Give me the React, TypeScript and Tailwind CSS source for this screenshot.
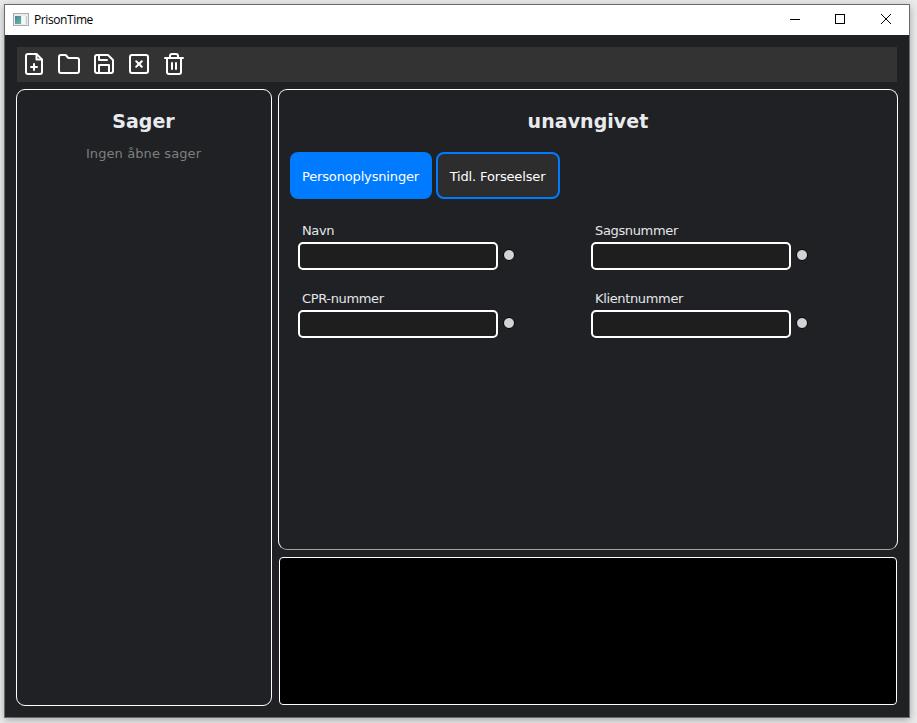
import React from "react";

const icons: Record<string, string[]> = {
  add: [
    "M14.5 2H6a2 2 0 0 0-2 2v16a2 2 0 0 0 2 2h12a2 2 0 0 0 2-2V7.5Z",
    "M14.5 2.5v5h5",
    "M9 15h6",
    "M12 12v6",
  ],
  folder: [
    "M20 21a2 2 0 0 0 2-2V8a2 2 0 0 0-2-2h-7.9a2 2 0 0 1-1.69-.9L9.6 3.9A2 2 0 0 0 7.93 3H4a2 2 0 0 0-2 2v14a2 2 0 0 0 2 2Z",
  ],
  save: [
    "M19 21H5a2 2 0 0 1-2-2V5a2 2 0 0 1 2-2h11l5 5v11a2 2 0 0 1-2 2z",
    "M17 21v-8H7v8",
    "M7 3v5h8",
  ],
  close: [
    "M5 3h14a2 2 0 0 1 2 2v14a2 2 0 0 1-2 2H5a2 2 0 0 1-2-2V5a2 2 0 0 1 2-2z",
    "m14.8 9.2-5.6 5.6",
    "m9.2 9.2 5.6 5.6",
  ],
  trash: [
    "M3 6h18",
    "M19 6v14a2 2 0 0 1-2 2H7a2 2 0 0 1-2-2V6",
    "M8 6V4a2 2 0 0 1 2-2h4a2 2 0 0 1 2 2v2",
    "M10 11v6",
    "M14 11v6",
  ],
};

function ToolIcon({ name }: { name: string }) {
  return (
    <button aria-label={name} className="h-6 w-6">
      <svg width="24" height="24" viewBox="0 0 24 24" fill="none" stroke="#fff" strokeWidth="2" strokeLinecap="round" strokeLinejoin="round">
        {icons[name].map((d) => (
          <path key={d} d={d} />
        ))}
      </svg>
    </button>
  );
}

function Field({ label }: { label: string }) {
  return (
    <div className="h-[68px]">
      <label className="block pl-1 text-[13px] leading-[18px] tracking-[-0.35px] text-[#e4e6e9]">{label}</label>
      <div className="mt-[2px] flex items-center">
        <input aria-label={label} className="h-7 w-[200px] rounded-[5px] border-2 border-white bg-[#1e1e1e] outline-none" />
        <span className="-mt-[2px] ml-[5px] h-3 w-3 rounded-full border border-black bg-[#d3d3d3]" />
      </div>
    </div>
  );
}

export default function App() {
  return (
    <div className="h-[723px] w-[917px] overflow-hidden bg-[#ebebeb] pl-1 pt-1 font-['DejaVu_Sans',sans-serif]">
      <div className="flex h-[714px] w-[906px] flex-col border border-[#6b6b6b] bg-[#202124] shadow-[0_2px_8px_rgba(0,0,0,0.3)]">
        <header className="flex h-[30px] shrink-0 items-center bg-white">
          <svg className="ml-2" width="16" height="14" viewBox="0 0 16 14" shapeRendering="crispEdges">
            <defs>
              <linearGradient id="pane" x1="0" y1="0" x2="0.6" y2="1">
                <stop offset="0" stopColor="#4b7fa8" />
                <stop offset="1" stopColor="#62b58c" />
              </linearGradient>
            </defs>
            <rect width="16" height="13" fill="#a9adb3" />
            <rect x="1" y="1" width="14" height="11" fill="#e9ecee" />
            <rect x="2" y="3" width="6" height="8" fill="url(#pane)" />
            <rect x="9" y="3" width="3" height="8" fill="#f8f8f8" />
            <rect x="13" y="3" width="1" height="8" fill="#b9d5cd" />
          </svg>
          <span className="ml-[5px] font-['Open_Sans',sans-serif] text-[12px] tracking-[-0.4px] text-black">PrisonTime</span>
          <div className="ml-auto flex items-center">
            <svg width="138" height="30" viewBox="0 0 138 30" fill="none" stroke="#000">
              <path d="M19 14.5h10" shapeRendering="crispEdges" />
              <path d="M64.5 9.5h9v9h-9z" shapeRendering="crispEdges" />
              <path d="m110 9 10 10m0-10-10 10" />
            </svg>
          </div>
        </header>
        <nav className="ml-3 mt-3 flex h-[35px] w-[880px] shrink-0 items-start gap-[11px] bg-[#333] pl-[5px] pt-[5px]">
          <ToolIcon name="add" />
          <ToolIcon name="folder" />
          <ToolIcon name="save" />
          <ToolIcon name="close" />
          <ToolIcon name="trash" />
        </nav>
        <main className="ml-[11px] mt-[7px] flex gap-[6px]">
          <aside className="h-[617px] w-[256px] rounded-[9px] border border-white text-center">
            <h2 className="mt-[18px] pr-px text-[19px] font-bold leading-[26px] text-[#e8eaed]">Sager</h2>
            <p className="mt-[11px] pr-px text-[13px] leading-[18px] tracking-[0.1px] text-[#7f7f7f]">Ingen åbne sager</p>
          </aside>
          <div className="flex flex-col gap-[7px]">
            <section className="h-[461px] w-[620px] rounded-[9px] border border-white border-b-[#a0a3a2] pl-[11px]">
              <h1 className="mr-[11px] mt-[18px] text-center text-[19px] font-bold leading-[26px] tracking-[0.05px] text-[#e8eaed]">unavngivet</h1>
              <div className="mt-[18px] flex gap-1 text-[13px] tracking-[-0.15px] text-white">
                <button className="h-[47px] w-[142px] rounded-[8px] bg-[#007bff] pr-px pt-[2px]">Personoplysninger</button>
                <button className="h-[47px] w-[124px] rounded-[8px] border-2 border-[#007bff] bg-[#2d2d2d] pr-px pt-[2px]">Tidl. Forseelser</button>
              </div>
              <div className="ml-2 mt-[23px] grid grid-cols-[293px_293px]">
                <Field label="Navn" />
                <Field label="Sagsnummer" />
                <Field label="CPR-nummer" />
                <Field label="Klientnummer" />
              </div>
            </section>
            <div className="ml-px h-[148px] w-[618px] rounded-[4px] border border-white bg-black" />
          </div>
        </main>
      </div>
    </div>
  );
}
